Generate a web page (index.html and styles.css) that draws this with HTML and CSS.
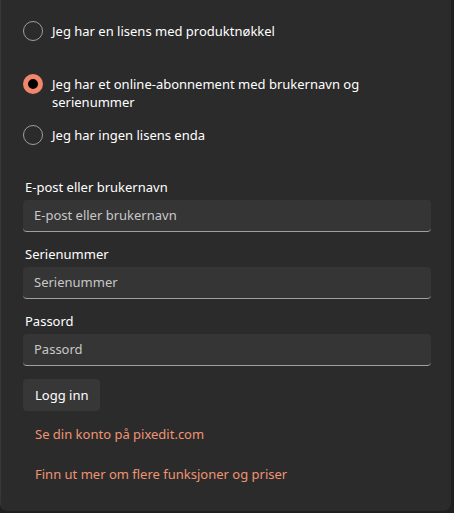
FILE: index.html
```html
<!DOCTYPE html>
<html lang="no">
<head>
<meta charset="utf-8">
<link rel="stylesheet" href="styles.css">
</head>
<body>
<div class="panel">
  <div class="options">
    <label class="radio opt1"><span class="dot"></span><span class="rtext">Jeg har en lisens med produktnøkkel</span></label>
    <label class="radio opt2 checked"><span class="dot"></span><span class="rtext">Jeg har et online-abonnement med brukernavn og serienummer</span></label>
    <label class="radio opt3"><span class="dot"></span><span class="rtext">Jeg har ingen lisens enda</span></label>
  </div>
  <div class="form">
    <div class="field">
      <div class="flabel">E-post eller brukernavn</div>
      <div class="input">E-post eller brukernavn</div>
    </div>
    <div class="field">
      <div class="flabel">Serienummer</div>
      <div class="input">Serienummer</div>
    </div>
    <div class="field">
      <div class="flabel">Passord</div>
      <div class="input">Passord</div>
    </div>
    <div class="btn">Logg inn</div>
    <div class="link link1">Se din konto på pixedit.com</div>
    <div class="link link2">Finn ut mer om flere funksjoner og priser</div>
  </div>
</div>
</body>
</html>
```
FILE: styles.css
```css
html, body {
  margin: 0;
  padding: 0;
  background: #1f1f1f;
}
body {
  font-family: "Noto Sans", "Open Sans", sans-serif;
  font-size: 13px;
  color: #ffffff;
}
.panel {
  width: 451px;
  height: 511px;
  box-sizing: border-box;
  background: #2b2b2b;
  border-left: 1px solid #383838;
  border-radius: 0 0 8px 8px;
  padding: 21px 23px 0 22px;
}
.options {
  display: flex;
  flex-direction: column;
}
.radio {
  display: flex;
  align-items: flex-start;
  gap: 9px;
}
.dot {
  flex: none;
  width: 20px;
  height: 20px;
  box-sizing: border-box;
  border-radius: 50%;
  border: 1px solid #9e9e9e;
}
.checked .dot {
  border: 5px solid #f0876a;
  background: #000;
}
.rtext {
  line-height: 18px;
  padding-top: 1px;
  width: 340px;
}
.opt2 { margin-top: 33px; }
.opt3 { margin-top: 14px; }
.form {
  margin-top: 33px;
  display: flex;
  flex-direction: column;
}
.field { margin-bottom: 13px; }
.field:last-of-type { margin-bottom: 12px; }
.flabel {
  line-height: 18px;
  padding-left: 2px;
  margin-bottom: 4px;
}
.input {
  height: 32px;
  box-sizing: border-box;
  background: #353535;
  border-radius: 4px;
  border-bottom: 1px solid #a0a0a0;
  color: #c8c8c8;
  padding: 6px 11px;
  line-height: 19px;
  width: 408px;
}
.btn {
  align-self: flex-start;
  background: #373737;
  border-radius: 4px;
  height: 32px;
  box-sizing: border-box;
  line-height: 32px;
  padding: 0 12px;
}
.link {
  color: #ef9472;
  padding-left: 12px;
  line-height: 18px;
}
.link1 { margin-top: 14px; }
.link2 { margin-top: 22px; }
```
